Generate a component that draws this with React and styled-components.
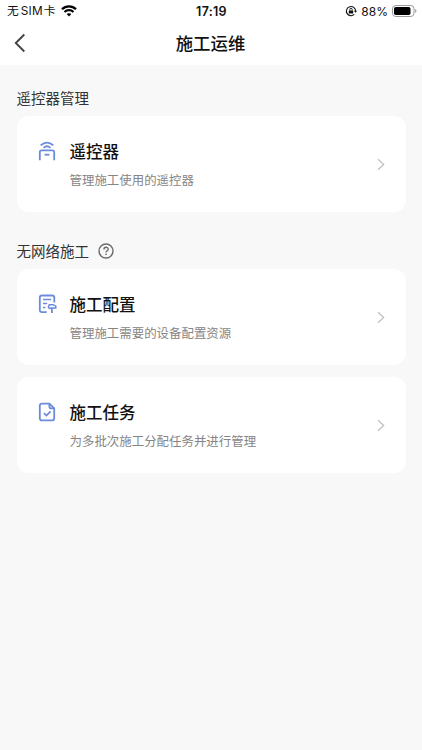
import styled, { createGlobalStyle } from "styled-components"

const sections = [
    {
        title: "遥控器管理",
        items: [
            { title: "遥控器", desc: "管理施工使用的遥控器", icon: "remote" },
        ],
    },
    {
        title: "无网络施工",
        hasHelp: true,
        items: [
            { title: "施工配置", desc: "管理施工需要的设备配置资源", icon: "config" },
            { title: "施工任务", desc: "为多批次施工分配任务并进行管理", icon: "task" },
        ],
    },
]

const WifiIcon = () => (
    <svg width="16" height="12" viewBox="0 0 16 12" fill="none" stroke="#000" strokeWidth="2.3">
        <path d="M1 4.3C4.9 .5 11.1 .5 15 4.3" />
        <path d="M3.5 7C6 4.6 10 4.6 12.5 7" />
        <path d="M8 11.5 5.6 9.1C6.9 7.9 9.1 7.9 10.4 9.1Z" fill="#000" stroke="none" />
    </svg>
)

const RotationLockIcon = () => (
    <svg width="12" height="12" viewBox="0 0 12 12" fill="none" stroke="#111">
        <path d="M9.2 9.4A4.6 4.6 0 1 1 10.6 6" strokeWidth="1.1" />
        <path d="M8.9 5.7h3.1L10.5 7.7Z" fill="#111" stroke="none" />
        <rect x="3.8" y="5.4" width="4.4" height="3.2" rx=".5" fill="#111" stroke="none" />
        <path d="M4.8 5.6V4.5a1.2 1.2 0 0 1 2.4 0v1.1" strokeWidth=".9" />
    </svg>
)

const BatteryIcon = () => (
    <svg width="25" height="12" viewBox="0 0 25 12">
        <rect x=".5" y=".5" width="21.5" height="11" rx="3.2" fill="none" stroke="#999" />
        <rect x="2" y="2" width="16.5" height="8" rx="1.8" fill="#000" />
        <path d="M23.2 4.1c1.7.5 1.7 3.3 0 3.8Z" fill="#999" />
    </svg>
)

const BackIcon = () => (
    <svg width="12" height="20" viewBox="0 0 12 20" fill="none" stroke="#444" strokeWidth="1.9">
        <path d="M10.3 1.5 1.8 10l8.5 8.5" />
    </svg>
)

const HelpIcon = () => (
    <svg width="16" height="16" viewBox="0 0 16 16" fill="none" stroke="#6b6b6b" strokeWidth="1.4">
        <circle cx="8" cy="8" r="7" />
        <path d="M5.9 6.4C5.9 3.4 10.2 3.6 10.2 6.2 10.2 7.8 8 7.8 8 9.6" />
        <path d="M8 10.7v1.4" strokeWidth="1.5" />
    </svg>
)

const ArrowIcon = () => (
    <svg width="8" height="13" viewBox="0 0 8 13" fill="none" stroke="#bdbdbd" strokeWidth="1.2">
        <path d="M1 1.2 6.7 6.5 1 11.8" />
    </svg>
)

const icons = {
    remote: (
        <>
            <path d="M3.6 4.4Q10 -1.2 16.4 4.4" />
            <path d="M6.5 6.8Q10 3.7 13.5 6.8" />
            <path d="M2.8 19.3V11.2Q2.8 9.4 4.6 9.4h10.8q1.8 0 1.8 1.8V19.3" />
            <path d="M7.6 13.7h4.8" />
        </>
    ),
    config: (
        <>
            <path d="M9.7 18.2H4.9q-2.1 0-2.1-2.1V3.6q0-2.1 2.1-2.1h10.3q2.1 0 2.1 2.1v5" />
            <path d="M6 5.6h8M6 9.6h4.2M6 13.4h2.4" strokeWidth="1.5" />
            <path d="M12.3 10.7h3.9l2.6 1.5v1.7h-4.2l-2.3.6-1-1.6Z" strokeWidth="1.5" />
            <path d="M14.9 13.9V19" />
        </>
    ),
    task: (
        <>
            <path d="M12.4 1.6H5q-2.2 0-2.2 2.2v12.4q0 2.2 2.2 2.2h10q2.2 0 2.2-2.2V6.4Z" />
            <path d="M12.4 1.6v2.8q0 2 2 2h2.8" />
            <path d="m6.9 11.2 2.5 2.4 4.2-4.3" />
        </>
    ),
}

const Card = ({ title, desc, icon }) => (
    <CardWrapper>
        <CardIcon viewBox="0 0 20 20">{icons[icon]}</CardIcon>
        <CardText>
            <CardTitle>{title}</CardTitle>
            <CardDesc>{desc}</CardDesc>
        </CardText>
        <ArrowIcon />
    </CardWrapper>
)

const App = () => {
    return (
        <>
            <GlobalStyle />
            <Container>
                <StatusBar>
                    <Carrier>
                        <span>无<b>SIM</b>卡</span>
                        <WifiIcon />
                    </Carrier>
                    <Clock>17:19</Clock>
                    <Power>
                        <RotationLockIcon />
                        <span>88%</span>
                        <BatteryIcon />
                    </Power>
                </StatusBar>
                <NavBar>
                    <BackIcon />
                    <h1>施工运维</h1>
                </NavBar>
                <Content>
                    {sections.map(section => (
                        <Section key={section.title}>
                            <SectionHead>
                                <h2>{section.title}</h2>
                                {section.hasHelp && <HelpIcon />}
                            </SectionHead>
                            <CardList>
                                {section.items.map(item => (
                                    <Card key={item.title} {...item} />
                                ))}
                            </CardList>
                        </Section>
                    ))}
                </Content>
            </Container>
        </>
    )
}

export default App

const GlobalStyle = createGlobalStyle`
    * {
        box-sizing: border-box;
    }

    body, h1, h2, h3, p {
        margin: 0;
    }

    body {
        font-family: "Noto Sans CJK SC", sans-serif;
        background: #f8f8f8;
    }

    svg {
        display: block;
        flex: none;
    }
`

const Container = styled.div`
    min-height: 100vh;
    background: #f8f8f8;
`

const StatusBar = styled.header`
    height: 22px;
    display: grid;
    grid-template-columns: 1fr auto 1fr;
    align-items: center;
    padding: 0 5px 0 7px;
    background: #fff;
    color: #111;
    font-family: Inter, "Noto Sans CJK SC", sans-serif;
    font-size: 12px;
    line-height: 22px;

    span{
        display: block;
        padding-top: 1px;
        line-height: 21px;
    }
`

const Carrier = styled.div`
    display: flex;
    align-items: center;
    gap: 5px;
    font-size: 11.8px;

    b{
        font-weight: 400;
        letter-spacing: 0.2px;
        margin: 0 1px 0 2px;
    }
`

const Clock = styled.div`
    padding: 1px 1px 0 0;
    font-size: 12.5px;
    font-weight: 600;
    line-height: 21px;
    letter-spacing: 0.3px;
`

const Power = styled.div`
    display: flex;
    align-items: center;
    justify-content: flex-end;
    gap: 4px;
    font-size: 12px;
`

const NavBar = styled.nav`
    height: 43px;
    display: grid;
    grid-template-columns: 1fr auto 1fr;
    align-items: center;
    padding: 0 15px 1px 14px;
    background: #fff;

    h1{
        font-size: 17.4px;
        font-weight: 500;
        line-height: 26px;
        color: #111;
    }
`

const Content = styled.main`
    padding: 20px 16.5px;
    display: flex;
    flex-direction: column;
    gap: 26px;
`

const Section = styled.section`
    display: flex;
    flex-direction: column;
    gap: 5px;
`

const SectionHead = styled.div`
    height: 26px;
    display: flex;
    align-items: center;
    gap: 8.5px;

    h2{
        font-size: 14.5px;
        font-weight: 400;
        line-height: 26px;
        color: #333;
    }
`

const CardList = styled.div`
    display: flex;
    flex-direction: column;
    gap: 12px;
`

const CardWrapper = styled.article`
    height: 96px;
    display: flex;
    align-items: center;
    padding: 0 21px 0 20px;
    border-radius: 12px;
    background: #fff;
`

const CardIcon = styled.svg`
    width: 20px;
    height: 20px;
    align-self: flex-start;
    margin-top: 25px;
    fill: none;
    stroke: #6b8bdd;
    stroke-width: 1.8;
`

const CardText = styled.div`
    flex: 1;
    padding: 2px 0 0 13px;
`

const CardTitle = styled.h3`
    font-size: 16.5px;
    font-weight: 500;
    line-height: 28px;
    color: #111;
`

const CardDesc = styled.p`
    margin-top: 2px;
    font-size: 12.45px;
    line-height: 26px;
    color: #858585;
`
